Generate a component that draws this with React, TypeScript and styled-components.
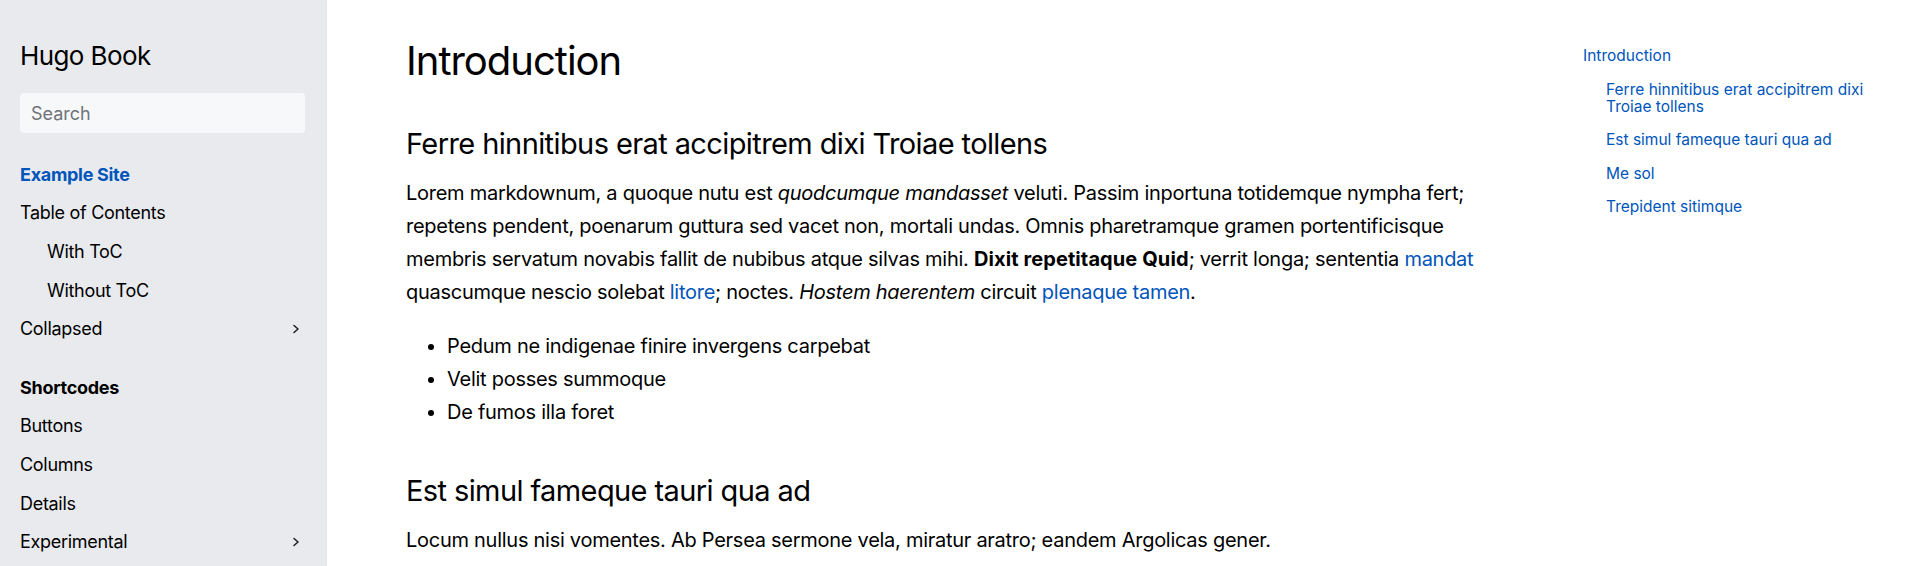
import React from "react";
import styled, { createGlobalStyle } from "styled-components";

const menu = [
  { label: "Table of Contents", level: 0 },
  { label: "With ToC", level: 1 },
  { label: "Without ToC", level: 1 },
  { label: "Collapsed", level: 0, more: true },
];

const shortcodes = [
  { label: "Buttons" },
  { label: "Columns" },
  { label: "Details" },
  { label: "Experimental", more: true },
];

const toc = [
  "Ferre hinnitibus erat accipitrem dixi Troiae tollens",
  "Est simul fameque tauri qua ad",
  "Me sol",
  "Trepident sitimque",
];

const Chevron = () => (
  <svg width="10" height="12" viewBox="0 0 10 12" fill="none">
    <path d="M3 2.5L7 6L3 9.5" stroke="#222" strokeWidth="1.6" strokeLinecap="round" strokeLinejoin="round" />
  </svg>
);

export default function App() {
  return (
    <>
      <Global />
      <Page>
        <Sidebar>
          <Brand>Hugo Book</Brand>
          <Search placeholder="Search" />
          <MenuList>
            <MenuItem $active $bold>Example Site</MenuItem>
            {menu.map((m) => (
              <MenuItem key={m.label} $level={m.level}>
                <span>{m.label}</span>
                {m.more && <Chevron />}
              </MenuItem>
            ))}
          </MenuList>
          <MenuList $spaced>
            <MenuItem $bold>Shortcodes</MenuItem>
            {shortcodes.map((m) => (
              <MenuItem key={m.label}>
                <span>{m.label}</span>
                {m.more && <Chevron />}
              </MenuItem>
            ))}
          </MenuList>
        </Sidebar>

        <Main>
          <Article>
            <H1>Introduction</H1>
            <H2>Ferre hinnitibus erat accipitrem dixi Troiae tollens</H2>
            <P>
              Lorem markdownum, a quoque nutu est <em>quodcumque mandasset</em> veluti. Passim
              inportuna totidemque nympha fert; repetens pendent, poenarum guttura sed vacet non,
              mortali undas. Omnis pharetramque gramen portentificisque membris servatum novabis
              fallit de nubibus atque silvas mihi. <Strong>Dixit repetitaque Quid</Strong>; verrit
              longa; sententia <Link>mandat</Link> quascumque nescio solebat <Link>litore</Link>;
              noctes. <em>Hostem haerentem</em> circuit <Link>plenaque tamen</Link>.
            </P>
            <Bullets>
              <li>Pedum ne indigenae finire invergens carpebat</li>
              <li>Velit posses summoque</li>
              <li>De fumos illa foret</li>
            </Bullets>
            <H2 $gap={44}>Est simul fameque tauri qua ad</H2>
            <P>Locum nullus nisi vomentes. Ab Persea sermone vela, miratur aratro; eandem Argolicas gener.</P>
          </Article>
        </Main>

        <Toc>
          <TocItem>Introduction</TocItem>
          <TocNested>
            {toc.map((t) => (
              <TocItem key={t}>{t}</TocItem>
            ))}
          </TocNested>
        </Toc>
      </Page>
    </>
  );
}

const Global = createGlobalStyle`
  * { box-sizing: border-box; }
  body {
    margin: 0;
    font-family: Inter, "Noto Sans", sans-serif;
    color: #000;
    background: #fff;
  }
`;

const Page = styled.div`
  display: flex;
  height: 566px;
  overflow: hidden;
`;

const Sidebar = styled.aside`
  flex: 0 0 327px;
  background: #e9eaed;
  border-right: 1px solid #e4e5e8;
  padding: 20px;
  font-size: 18px;
  letter-spacing: -0.3px;
`;

const Brand = styled.h2`
  margin: 20px 0 0;
  font-size: 26px;
  line-height: 31px;
  font-weight: 400;
  letter-spacing: -0.6px;
`;

const Search = styled.input`
  display: block;
  width: 285px;
  height: 40px;
  margin-top: 22px;
  padding: 0 11px;
  border: none;
  border-radius: 4px;
  background: #f7f8fa;
  font: inherit;
  font-size: 18px;
  &::placeholder {
    color: #6f7378;
  }
`;

const MenuList = styled.div<{ $spaced?: boolean }>`
  display: flex;
  flex-direction: column;
  margin-top: ${(p) => (p.$spaced ? 20 : 22)}px;
`;

const MenuItem = styled.div<{ $level?: number; $bold?: boolean; $active?: boolean }>`
  display: flex;
  align-items: center;
  justify-content: space-between;
  height: 38.6px;
  padding-left: ${(p) => (p.$level ? 27 : 0)}px;
  padding-right: 5px;
  font-weight: ${(p) => (p.$bold ? 700 : 400)};
  color: ${(p) => (p.$active ? "#0055bb" : "#000")};
`;

const Main = styled.main`
  flex: 1 1 auto;
  padding-left: 79px;
`;

const Article = styled.article`
  max-width: 1100px;
  font-size: 20px;
  line-height: 33px;
  letter-spacing: -0.27px;
`;

const H1 = styled.h1`
  margin: 36px 0 0;
  font-size: 40px;
  line-height: 49px;
  font-weight: 400;
  letter-spacing: -1px;
`;

const H2 = styled.h2<{ $gap?: number }>`
  margin: ${(p) => p.$gap ?? 41}px 0 0;
  font-size: 29px;
  line-height: 35px;
  font-weight: 400;
  letter-spacing: -0.6px;
`;

const P = styled.p`
  margin: 16px 0 0;
`;

const Strong = styled.strong`
  letter-spacing: 0.1px;
`;

const Link = styled.a`
  color: #0055bb;
  text-decoration: none;
`;

const Bullets = styled.ul`
  margin: 21px 0 0;
  padding-left: 41px;
`;

const Toc = styled.nav`
  flex: 0 0 337px;
  padding: 47px 20px 0 0;
  font-size: 15.5px;
  line-height: 17px;
  color: #0055bb;
`;

const TocNested = styled.div`
  padding-left: 23px;
`;

const TocItem = styled.div`
  margin-bottom: 16.5px;
`;
